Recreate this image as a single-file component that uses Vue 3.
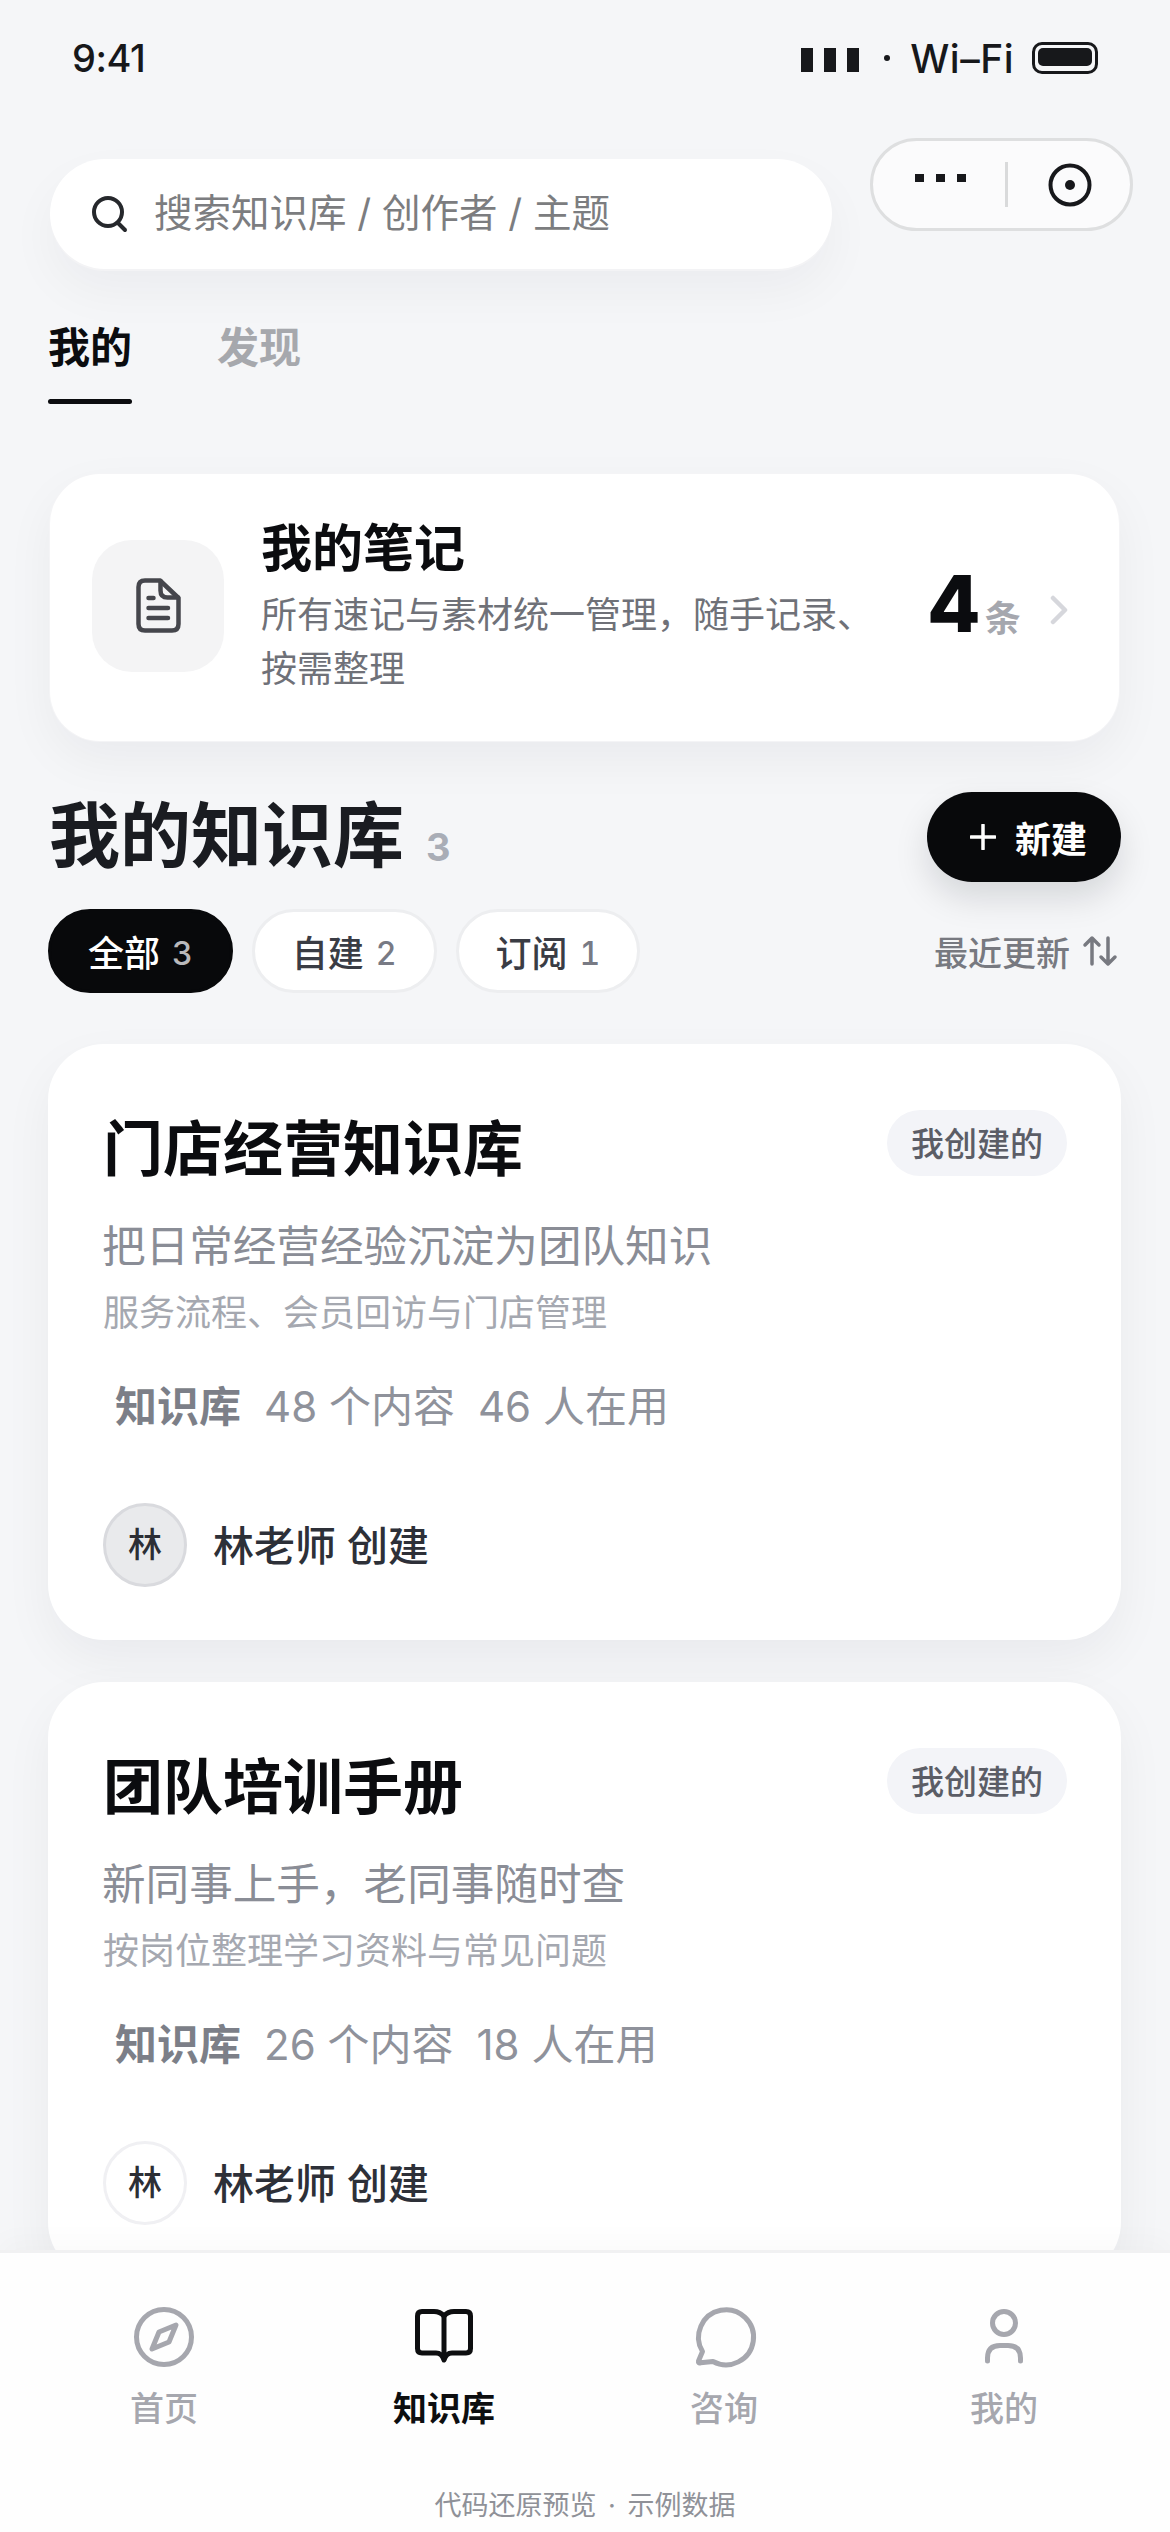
<template>
  <div class="page">
    <div class="status">
      <span class="time">9:41</span>
      <div class="status-right">
        <div class="signal"><i></i><i></i><i></i></div>
        <span class="status-dot"></span>
        <span class="wifi">Wi–Fi</span>
        <div class="battery"><i></i></div>
      </div>
    </div>

    <div class="top-row">
      <div class="search">
        <svg class="search-icon" viewBox="0 0 44 44" fill="none" stroke="#26282c" stroke-width="4" stroke-linecap="round">
          <circle cx="20" cy="20" r="14" />
          <path d="M30 31l7 7" />
        </svg>
        <span>搜索知识库 / 创作者 / 主题</span>
      </div>
      <div class="capsule">
        <div class="capsule-dots"><i></i><i></i><i></i></div>
        <span class="capsule-line"></span>
        <svg class="capsule-target" viewBox="0 0 46 46" fill="none">
          <circle cx="23" cy="23" r="19.5" stroke="#17181b" stroke-width="4" />
          <circle cx="23" cy="23" r="5" fill="#17181b" />
        </svg>
      </div>
    </div>

    <div class="tabs">
      <div class="tab active">我的</div>
      <div class="tab">发现</div>
    </div>

    <div class="note-card">
      <div class="note-icon">
        <svg viewBox="0 0 72 72" fill="none" stroke="#45464c" stroke-width="4.5" stroke-linecap="round" stroke-linejoin="round">
          <path d="M23 10.5h15L56.500 28v26q0 6.500-6.500 6.500H23q-6.500 0-6.500-6.500V17q0-6.500 6.500-6.500z" />
          <path d="M38.500 11v9.500q0 7 7 7H56" />
          <path d="M26.500 28h5M26.500 38h19.500M26.500 48h19.500" />
        </svg>
      </div>
      <div class="note-text">
        <div class="note-title">我的笔记</div>
        <div class="note-desc">所有速记与素材统一管理，随手记录、按需整理</div>
      </div>
      <div class="note-count">
        <span class="note-num">4</span>
        <span class="note-unit">条</span>
        <svg class="note-arrow" viewBox="0 0 20 30" fill="none" stroke="#d6d7dc" stroke-width="4.500" stroke-linecap="round" stroke-linejoin="round">
          <path d="M4 3l12 12L4 27" />
        </svg>
      </div>
    </div>

    <div class="section-head">
      <div class="section-title">
        <span class="section-name">我的知识库</span>
        <span class="section-num">3</span>
      </div>
      <div class="new-btn">
        <svg viewBox="0 0 26 26" fill="none" stroke="#fff" stroke-width="3.500" stroke-linecap="round">
          <path d="M13 1v24M1 13h24" />
        </svg>
        <span>新建</span>
      </div>
    </div>

    <div class="filter-row">
      <div class="chips">
        <div v-for="chip in chips" :key="chip.label" class="chip" :class="{ on: chip.on }">
          <span>{{ chip.label }}</span>
          <span class="chip-num">{{ chip.num }}</span>
        </div>
      </div>
      <div class="sort">
        <span>最近更新</span>
        <svg viewBox="0 0 36 32" fill="none" stroke="#777980" stroke-width="3.500" stroke-linecap="round" stroke-linejoin="round">
          <path d="M10 29V3M3 10l7-7 7 7" />
          <path d="M26 3v26M19 22l7 7 7-7" />
        </svg>
      </div>
    </div>

    <div class="cards">
      <div v-for="(card, i) in cards" :key="card.title" class="kb-card">
        <div class="kb-head">
          <div class="kb-title">{{ card.title }}</div>
          <div class="kb-badge">我创建的</div>
        </div>
        <div class="kb-sub">{{ card.sub }}</div>
        <div class="kb-desc">{{ card.desc }}</div>
        <div class="kb-meta">
          <span class="kb-tag">知识库</span>
          <span>{{ card.items }} 个内容</span>
          <span>{{ card.users }} 人在用</span>
        </div>
        <div class="kb-owner">
          <div class="avatar" :class="{ grey: i === 0 }">林</div>
          <span class="kb-owner-name">林老师 创建</span>
        </div>
      </div>
    </div>

    <div class="nav">
      <div class="nav-items">
        <div v-for="item in navItems" :key="item.key" class="nav-item" :class="{ active: item.active }">
          <svg viewBox="0 0 72 72" fill="none" stroke="currentColor" stroke-width="5" stroke-linecap="round" stroke-linejoin="round">
            <template v-if="item.key === 'home'">
              <circle cx="36" cy="36" r="27.500" />
              <path d="M48 24l-7 17-17 7 7-17z" />
            </template>
            <template v-else-if="item.key === 'book'">
              <path d="M36 15c-3-3.500-6-4.500-10-4.500H14q-4.500 0-4.500 4.500v32.500q0 4.500 4.500 4.500h14c4 0 6.500 2 8 7 1.500-5 4-7 8-7h14q4.500 0 4.500-4.500V15q0-4.500-4.500-4.500H46c-4 0-7 1-10 4.500z" />
              <path d="M36 15v40" />
            </template>
            <template v-else-if="item.key === 'chat'">
              <path d="M25 60.500A27.500 27.500 0 1 0 14.500 50.500L10.500 60q-.5 2.500 2 1.800z" />
            </template>
            <template v-else>
              <circle cx="36" cy="22" r="11.500" />
              <path d="M19.500 60v-3q0-12.500 12.500-12.500h8q12.500 0 12.500 12.500v3" />
            </template>
          </svg>
          <span>{{ item.label }}</span>
        </div>
      </div>
      <div class="nav-foot">代码还原预览 · 示例数据</div>
    </div>
  </div>
</template>

<script setup>
const chips = [
  { label: '全部', num: 3, on: true },
  { label: '自建', num: 2 },
  { label: '订阅', num: 1 }
]

const cards = [
  {
    title: '门店经营知识库',
    sub: '把日常经营经验沉淀为团队知识',
    desc: '服务流程、会员回访与门店管理',
    items: 48,
    users: 46
  },
  {
    title: '团队培训手册',
    sub: '新同事上手，老同事随时查',
    desc: '按岗位整理学习资料与常见问题',
    items: 26,
    users: 18
  }
]

const navItems = [
  { key: 'home', label: '首页' },
  { key: 'book', label: '知识库', active: true },
  { key: 'chat', label: '咨询' },
  { key: 'me', label: '我的' }
]
</script>

<style>
html,
body {
  margin: 0;
  background: #f5f6f8;
}
</style>

<style scoped>
.page {
  position: relative;
  width: 1170px;
  height: 2532px;
  overflow: hidden;
  background: #f5f6f8;
  font-family: Inter, "Noto Sans CJK SC", sans-serif;
  color: #0b0c0f;
}

/* status bar */
.status {
  height: 116px;
  padding: 0 72px;
  display: flex;
  align-items: center;
  justify-content: space-between;
  color: #17181b;
  font-size: 38px;
  font-weight: 500;
}

.time {
  letter-spacing: -0.5px;
}

.status-right {
  display: flex;
  align-items: center;
}

.signal {
  display: flex;
  gap: 11px;
  margin-top: 4px;
}

.signal i {
  display: block;
  width: 12px;
  height: 24px;
  background: #17181b;
}

.status-dot {
  width: 6px;
  height: 6px;
  margin: 0 20px 0 25px;
  border-radius: 50%;
  background: #17181b;
}

.wifi {
  font-size: 39px;
  letter-spacing: 0.5px;
}

.battery {
  width: 66px;
  height: 32px;
  box-sizing: border-box;
  margin-left: 18px;
  padding: 3px 3px 5px;
  border: 3px solid #17181b;
  border-radius: 10px;
}

.battery i {
  display: block;
  width: 100%;
  height: 100%;
  border-radius: 5px;
  background: #17181b;
}

/* search */
.top-row {
  display: flex;
  align-items: flex-start;
  gap: 38px;
  margin-top: 22px;
  padding-left: 50px;
}

.search {
  width: 782px;
  height: 110px;
  margin-top: 21px;
  padding-left: 38px;
  box-sizing: border-box;
  display: flex;
  align-items: center;
  gap: 22px;
  border-radius: 55px;
  background: #fff;
  box-shadow: 0 2px 0 #f3f3f5, 0 22px 50px rgba(20, 24, 40, 0.045);
  font-size: 38.5px;
  line-height: 50px;
  color: #7c7d80;
}

.search span {
  margin-top: -2px;
}

.search-icon {
  width: 44px;
  height: 44px;
}

.capsule {
  width: 263px;
  height: 93px;
  box-sizing: border-box;
  display: flex;
  align-items: center;
  border: 3px solid #dedfe0;
  border-radius: 47px;
  background: #fbfbfc;
}

.capsule-dots {
  display: flex;
  gap: 12px;
  margin: -14px 0 0 42px;
}

.capsule-dots i {
  display: block;
  width: 9px;
  height: 8px;
  background: #17181b;
}

.capsule-line {
  width: 3px;
  height: 45px;
  margin-left: 39px;
  background: #d9dadb;
}

.capsule-target {
  width: 46px;
  height: 46px;
  margin-left: 39px;
}

/* tabs */
.tabs {
  display: flex;
  gap: 85px;
  margin-top: 49px;
  padding-left: 48px;
}

.tab {
  position: relative;
  height: 86px;
  line-height: 60px;
  font-size: 42px;
  font-weight: 700;
  color: #a6a8ad;
}

.tab.active {
  color: #0b0c0f;
}

.tab.active::after {
  content: "";
  position: absolute;
  left: 0;
  right: 0;
  bottom: 0;
  height: 5px;
  border-radius: 3px;
  background: #0b0c0f;
}

/* notes */
.note-card {
  width: 1069px;
  height: 267px;
  box-sizing: border-box;
  margin: 70px 0 0 50px;
  padding: 0 42px;
  display: flex;
  align-items: center;
  border-radius: 50px;
  background: #fff;
  box-shadow: 0 0 0 1px #f4f4f6, 0 18px 50px rgba(20, 24, 40, 0.05);
}

.note-icon {
  flex: none;
  width: 132px;
  height: 132px;
  margin-top: -3px;
  display: flex;
  align-items: center;
  justify-content: center;
  border-radius: 40px;
  background: #f4f4f5;
}

.note-icon svg {
  width: 72px;
  height: 72px;
}

.note-text {
  width: 640px;
  margin-left: 37px;
}

.note-title {
  line-height: 60px;
  font-size: 51px;
  font-weight: 700;
}

.note-desc {
  margin-top: 9px;
  line-height: 54px;
  font-size: 36px;
  color: #6f7178;
}

.note-count {
  display: flex;
  align-items: baseline;
  margin: -8px 0 0 26px;
}

.note-num {
  font-size: 78px;
  line-height: 80px;
  font-weight: 800;
}

.note-unit {
  margin-left: 4px;
  font-size: 36px;
  font-weight: 600;
  color: #a5a7ae;
}

.note-arrow {
  align-self: center;
  width: 20px;
  height: 30px;
  margin: 12px 0 0 28px;
}

/* section head */
.section-head {
  display: flex;
  align-items: center;
  justify-content: space-between;
  margin-top: 51px;
  padding: 0 49px 0 49px;
}

.section-title {
  display: flex;
  align-items: baseline;
  gap: 22px;
  margin-top: -4px;
}

.section-name {
  font-size: 71px;
  line-height: 90px;
  font-weight: 700;
  color: #1a1c21;
}

.section-num {
  font-size: 38px;
  font-weight: 700;
  color: #a9adb6;
}

.new-btn {
  width: 194px;
  height: 90px;
  box-sizing: border-box;
  padding-left: 43px;
  display: flex;
  align-items: center;
  gap: 19px;
  border-radius: 45px;
  background: #08090b;
  box-shadow: 0 16px 34px rgba(10, 12, 20, 0.13);
  font-size: 36px;
  font-weight: 600;
  color: #fff;
}

.new-btn svg {
  width: 26px;
  height: 26px;
}

/* filters */
.filter-row {
  display: flex;
  align-items: center;
  justify-content: space-between;
  margin-top: 27px;
  padding: 0 52px 0 48px;
}

.chips {
  display: flex;
  gap: 19px;
}

.chip {
  height: 84px;
  padding: 0 37px;
  box-sizing: border-box;
  display: flex;
  align-items: center;
  gap: 12px;
  border: 3px solid #edeef0;
  border-radius: 42px;
  background: #fff;
  font-size: 36px;
  font-weight: 500;
  color: #3a3c44;
}

.chip.on {
  border-color: #08090b;
  background: #08090b;
  color: #fff;
}

.chip-num {
  margin-top: 4px;
  font-size: 32px;
  font-weight: 500;
  font-variant-numeric: tabular-nums;
  color: #787a84;
}

.chip.on .chip-num {
  color: #b9b9bb;
}

.sort {
  display: flex;
  align-items: center;
  gap: 12px;
  font-size: 34px;
  font-weight: 500;
  color: #777980;
}

.sort svg {
  width: 36px;
  height: 32px;
}

/* knowledge cards */
.cards {
  display: flex;
  flex-direction: column;
  gap: 42px;
  margin-top: 51px;
  padding-left: 48px;
}

.kb-card {
  width: 1073px;
  box-sizing: border-box;
  padding: 67px 54px 53px 55px;
  border-radius: 56px;
  background: #fff;
  box-shadow: 0 20px 50px rgba(20, 24, 40, 0.05);
}

.kb-head {
  display: flex;
  align-items: flex-start;
  justify-content: space-between;
}

.kb-title {
  font-size: 60px;
  line-height: 76px;
  font-weight: 700;
}

.kb-badge {
  height: 66px;
  margin-top: -1px;
  padding: 2px 24px 0;
  box-sizing: border-box;
  line-height: 64px;
  border-radius: 33px;
  background: #f3f4f8;
  font-size: 33px;
  font-weight: 500;
  color: #5b5d66;
}

.kb-sub {
  margin: 30px 0 0 -1px;
  line-height: 60px;
  font-size: 43.6px;
  color: #8a8d96;
}

.kb-desc {
  margin-top: 11px;
  line-height: 50px;
  font-size: 36px;
  color: #a5a8b0;
}

.kb-meta {
  display: flex;
  gap: 23px;
  margin-top: 39px;
  padding-left: 12px;
  line-height: 60px;
  font-size: 42px;
  color: #8f929b;
}

.kb-tag {
  font-weight: 600;
  color: #7c7f88;
}

.kb-owner {
  display: flex;
  align-items: center;
  gap: 26px;
  margin-top: 66px;
  font-size: 41px;
  font-weight: 500;
  color: #2d3038;
}

.kb-owner-name {
  margin-top: -5px;
}

.avatar {
  width: 84px;
  height: 84px;
  box-sizing: border-box;
  padding-bottom: 5px;
  display: flex;
  align-items: center;
  justify-content: center;
  border: 3px solid #f0f0f3;
  border-radius: 50%;
  background: #fff;
  font-size: 34px;
  font-weight: 500;
  color: #2c2e35;
}

.avatar.grey {
  border-color: #d9dade;
  background: #e9eaec;
}

/* bottom nav */
.nav {
  position: absolute;
  left: 0;
  right: 0;
  bottom: 0;
  height: 282px;
  box-sizing: border-box;
  border-top: 3px solid #f1f1f2;
  background: #fefefe;
  box-shadow: 0 -10px 26px rgba(20, 24, 40, 0.025);
}

.nav-items {
  display: grid;
  grid-template-columns: repeat(4, 280px);
  padding: 48px 0 0 24px;
}

.nav-item {
  display: flex;
  flex-direction: column;
  align-items: center;
  gap: 14px;
  color: #a6a7ae;
  font-size: 34px;
  font-weight: 500;
  line-height: 44px;
}

.nav-item svg {
  width: 72px;
  height: 72px;
}

.nav-item.active {
  color: #0d0e10;
  font-weight: 700;
}

.nav-foot {
  margin-top: 55px;
  text-align: center;
  line-height: 40px;
  font-size: 27px;
  word-spacing: 4px;
  color: #8f9198;
}
</style>
